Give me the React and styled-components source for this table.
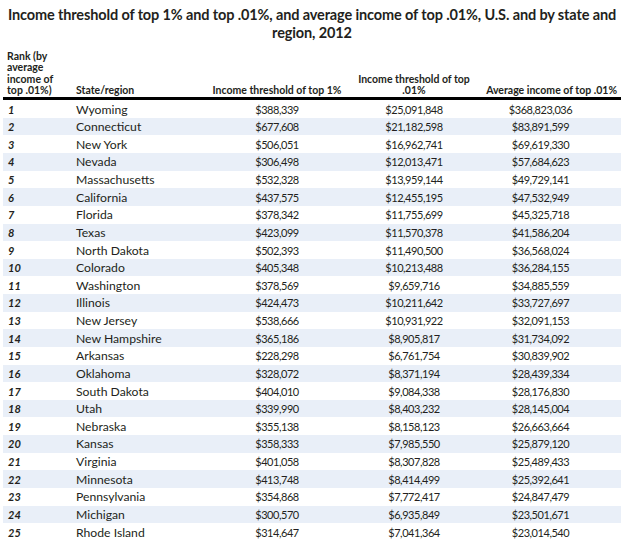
import React from "react";
import styled, { createGlobalStyle } from "styled-components";

const GlobalStyle = createGlobalStyle`
  html, body {
    margin: 0;
    padding: 0;
    background: #ffffff;
  }
  body {
    font-family: "Lato", "Liberation Sans", sans-serif;
    color: #231f20;
  }
`;

const Page = styled.div`
  width: 626px;
  padding: 6px 5px 0 3px;
  box-sizing: border-box;
`;

const Title = styled.h1`
  margin: 0 0 9px;
  font-size: 14.5px;
  line-height: 18px;
  font-weight: 700;
  letter-spacing: -0.13px;
  text-align: center;
`;

const Table = styled.div`
  display: grid;
  grid-template-columns: 69px 128px 154px 120px 147px;
  width: 618px;
`;

const Head = styled.div`
  display: contents;
`;

const HeadCell = styled.div`
  display: flex;
  align-items: flex-end;
  justify-content: ${(p) => p.$justify || "flex-start"};
  text-align: ${(p) => p.$align || "left"};
  padding: 0 4px 1px;
  font-size: 10.5px;
  line-height: 11.3px;
  font-weight: 700;
  border-bottom: 3px solid #000;
`;

const Row = styled.div`
  display: contents;
  > * {
    background: ${(p) => (p.$alt ? "#e9eff8" : "#ffffff")};
  }
`;

const Cell = styled.div`
  height: 17.625px;
  display: flex;
  align-items: center;
  justify-content: ${(p) => p.$justify || "flex-start"};
  padding: 0 ${(p) => p.$pr || 4}px 0 4px;
  font-size: 12.2px;
  white-space: nowrap;
`;

const Money = styled(Cell)`
  justify-content: center;
  font-size: 11px;
  letter-spacing: -0.45px;
`;

const Rank = styled(Cell)`
  padding-left: 5px;
  font-size: 11px;
  font-weight: 700;
  font-style: italic;
`;

const rows = [
  ["Wyoming", "$388,339", "$25,091,848", "$368,823,036"],
  ["Connecticut", "$677,608", "$21,182,598", "$83,891,599"],
  ["New York", "$506,051", "$16,962,741", "$69,619,330"],
  ["Nevada", "$306,498", "$12,013,471", "$57,684,623"],
  ["Massachusetts", "$532,328", "$13,959,144", "$49,729,141"],
  ["California", "$437,575", "$12,455,195", "$47,532,949"],
  ["Florida", "$378,342", "$11,755,699", "$45,325,718"],
  ["Texas", "$423,099", "$11,570,378", "$41,586,204"],
  ["North Dakota", "$502,393", "$11,490,500", "$36,568,024"],
  ["Colorado", "$405,348", "$10,213,488", "$36,284,155"],
  ["Washington", "$378,569", "$9,659,716", "$34,885,559"],
  ["Illinois", "$424,473", "$10,211,642", "$33,727,697"],
  ["New Jersey", "$538,666", "$10,931,922", "$32,091,153"],
  ["New Hampshire", "$365,186", "$8,905,817", "$31,734,092"],
  ["Arkansas", "$228,298", "$6,761,754", "$30,839,902"],
  ["Oklahoma", "$328,072", "$8,371,194", "$28,439,334"],
  ["South Dakota", "$404,010", "$9,084,338", "$28,176,830"],
  ["Utah", "$339,990", "$8,403,232", "$28,145,004"],
  ["Nebraska", "$355,138", "$8,158,123", "$26,663,664"],
  ["Kansas", "$358,333", "$7,985,550", "$25,879,120"],
  ["Virginia", "$401,058", "$8,307,828", "$25,489,433"],
  ["Minnesota", "$413,748", "$8,414,499", "$25,392,641"],
  ["Pennsylvania", "$354,868", "$7,772,417", "$24,847,479"],
  ["Michigan", "$300,570", "$6,935,849", "$23,501,671"],
  ["Rhode Island", "$314,647", "$7,041,364", "$23,014,540"],
];

export default function App() {
  return (
    <Page>
      <GlobalStyle />
      <Title>
        Income threshold of top 1% and top .01%, and average income of top
        .01%, U.S. and by state and region, 2012
      </Title>
      <Table>
        <Head>
          <HeadCell>
            Rank (by
            <br />
            average
            <br />
            income of
            <br />
            top .01%)
          </HeadCell>
          <HeadCell>State/region</HeadCell>
          <HeadCell $justify="center" $align="center">
            Income threshold of top 1%
          </HeadCell>
          <HeadCell $justify="center" $align="center">
            Income threshold of top
            <br />
            .01%
          </HeadCell>
          <HeadCell $justify="flex-end" $align="right">
            Average income of top .01%
          </HeadCell>
        </Head>
        {rows.map((r, i) => (
          <Row key={r[0]} $alt={i % 2 === 1}>
            <Rank>{i + 1}</Rank>
            <Cell>{r[0]}</Cell>
            <Money>{r[1]}</Money>
            <Money>{r[2]}</Money>
            <Money $pr={18}>{r[3]}</Money>
          </Row>
        ))}
      </Table>
    </Page>
  );
}
